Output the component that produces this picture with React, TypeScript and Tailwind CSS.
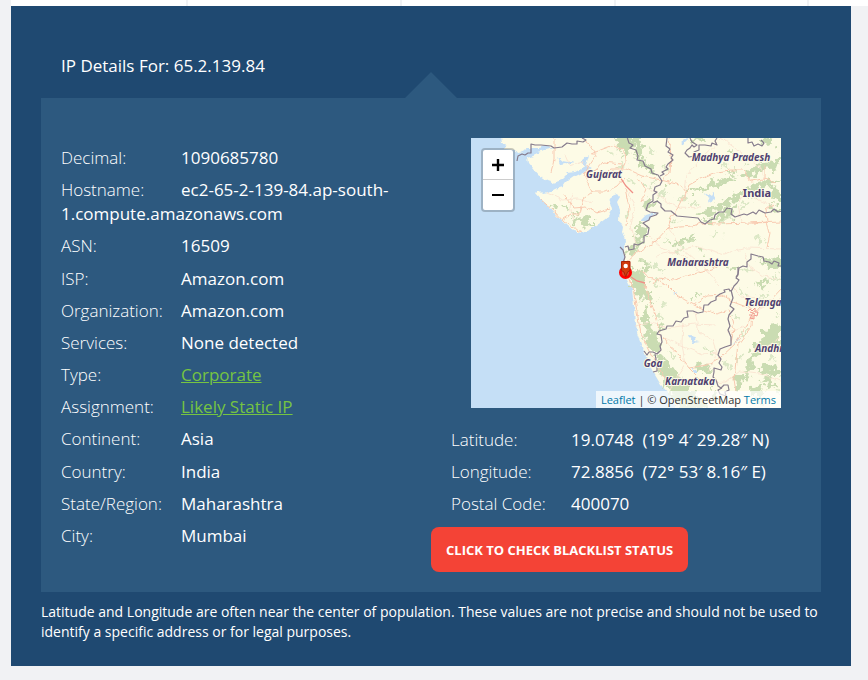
import React from "react";

type Entry = { label: string; value: string; href?: string };

const details: Entry[] = [
  { label: "Decimal:", value: "1090685780" },
  { label: "Hostname:", value: "ec2-65-2-139-84.ap-south-1.compute.amazonaws.com" },
  { label: "ASN:", value: "16509" },
  { label: "ISP:", value: "Amazon.com" },
  { label: "Organization:", value: "Amazon.com" },
  { label: "Services:", value: "None detected" },
  { label: "Type:", value: "Corporate", href: "#corporate" },
  { label: "Assignment:", value: "Likely Static IP", href: "#static" },
  { label: "Continent:", value: "Asia" },
  { label: "Country:", value: "India" },
  { label: "State/Region:", value: "Maharashtra" },
  { label: "City:", value: "Mumbai" },
];

const position: Entry[] = [
  { label: "Latitude:", value: "19.0748\u00a0 (19° 4′ 29.28″ N)" },
  { label: "Longitude:", value: "72.8856\u00a0 (72° 53′ 8.16″ E)" },
  { label: "Postal Code:", value: "400070" },
];

function Row({ label, value, href }: Entry) {
  return (
    <div>
      <dt className="inline-block w-[120px] font-light">{label}</dt>
      <dd className="inline">
        {href ? (
          <a href={href} className="text-[#76c442] underline">
            {value}
          </a>
        ) : (
          value
        )}
      </dd>
    </div>
  );
}

const places = [
  { name: "Gujarat", x: 133, y: 40, size: 10 },
  { name: "Madhya Pradesh", x: 260, y: 23, size: 10 },
  { name: "Maharashtra", x: 227, y: 128, size: 10 },
  { name: "Telangana", x: 298, y: 168, size: 10 },
  { name: "Andhra", x: 301, y: 214, size: 10 },
  { name: "Goa", x: 182, y: 229, size: 10 },
  { name: "Karnataka", x: 219, y: 247, size: 10 },
];

function MapDrawing() {
  return (
    <svg viewBox="0 0 310 270" className="block h-full w-full" preserveAspectRatio="xMidYMid slice" role="img" aria-label="Map of western India">
      <defs>
        <filter id="rough" x="-5%" y="-5%" width="110%" height="110%">
          <feTurbulence type="fractalNoise" baseFrequency="0.16" numOctaves="2" seed="4" />
          <feDisplacementMap in="SourceGraphic" scale="5" xChannelSelector="R" yChannelSelector="G" />
        </filter>
        <filter id="ragged" x="-5%" y="-5%" width="110%" height="110%">
          <feTurbulence type="fractalNoise" baseFrequency="0.16" numOctaves="3" seed="9" />
          <feDisplacementMap in="SourceGraphic" scale="16" xChannelSelector="R" yChannelSelector="G" />
        </filter>
      </defs>
      <rect width="310" height="270" fill="#c5dff6" />
      <path
        filter="url(#rough)"
        fill="#fdfbe6"
        d="M29-6 31 5 36 7 34 11 44 12 47 16 52 15 61 15 66 13 69 15 62 18 56 20 57 25 61 30 67 37 76 43 82 45 91 42 96 37 94 35 104 34 104 37 97 42 94 45 91 49 84 51 77 55 72 56 68 52 65 55 71 62 79 70 87 79 96 88 102 93 111 95 119 92 129 85 137 79 141 72 139 64 141 57 146 55 149 59 146 64 149 72 148 82 152 89 151 95 154 102 153 112 154 120 152 130 156 142 161 152 164 175 166 195 172 212 181 232 190 247 199 257 206 276H320V-6Z"
      />
      {/* lakes and inlets */}
      <g fill="#c5dff6" filter="url(#rough)">
        <path d="M86 19 91 23 97 24 103 23 99 27 94 26 90 27Z" />
        <path d="M110 24 118 17 115 27 121 30 111 35 105 38 99 37 106 33 113 29Z" />
        <path d="M49 14 58 10 68 10 76 8 82 10 74 12 66 14 56 17Z" />
        <path d="M170 82 175 77 182 75 187 75 180 79 175 83 170 83Z" />
        <path d="M234 55 240 59 243 53 243 59 245 62 241 61 239 64 237 60Z" />
        <path d="M209 5 216 0 218 1 212 7Z" />
        <path d="M218 198 225 199 223 203 228 204 221 205Z M263 205 269 198 267 203 262 207Z M219 228 226 233 224 235Z M202 156 206 154 205 157Z" />
      </g>
      {/* forests and hills */}
      <g fill="#cadcb2" filter="url(#ragged)">
        <path d="M144-2 148 10 153 20 163 8 160-4Z M162 0 172 0 170 14 174 24 187 34 183 37 173 30 165 22 164 12Z" />
        <path d="M102 80 114 79 124 83 124 89 113 88 104 85Z M82 66 88 67 86 72 81 70Z M90 67 96 67 94 71Z M102 74 106 74 105 78Z" />
        <path d="M193 45 199 45 196 50Z M169 70 178 63 186 61 184 66 175 72Z" />
        <path d="M216 54 232 48 252 40 267 37 260 44 243 49 226 54Z M268 36 285 28 311 19 311 27 293 33 275 41Z M254 35 264 32 262 37Z" />
        <path d="M224 78 240 71 255 60 272 51 287 44 302 41 311 43 296 49 281 54 267 62 254 70 239 76 230 80Z" />
        <path d="M230 84 242 79 252 73 264 68 263 78 245 82 235 86Z M298 46 311 55 311 63 300 58Z M297 67 309 68 309 74 302 75Z" />
        <path d="M165 86 177 89 177 96 169 99 165 94Z M163 100 172 98 174 103 166 110Z M158 110 166 108 164 116 157 115Z" />
        <path d="M198 105 211 101 225 98 217 105 202 108Z M228 107 234 115 230 116Z M170 121 180 124 182 130 171 132Z M194 80 210 84 199 83Z" />
        <path d="M159 130 169 132 173 140 172 147 178 154 182 163 179 165 172 158 169 164 165 155 160 146Z" />
        <path d="M171 170 175 168 177 181 183 192 188 206 190 213 180 213 173 203 177 194 170 180Z" />
        <path d="M184 215 191 219 199 227 207 237 214 246 230 260 239 271 209 274 201 258 191 244 187 230Z" />
        <path d="M188 185 193 188 191 199Z M228 225 241 229 233 237 225 232Z M240 258 246 250 249 267Z M222 157 232 155 224 162Z" />
        <path d="M283 207 291 202 293 190 305 185 311 190 311 207 301 209 289 216 280 219Z M276 226 282 215 283 230 277 244 274 240Z" />
        <path d="M284 231 293 226 306 230 310 236 299 238Z M288 242 298 240 309 248 298 250Z M265 238 273 236 270 255 264 251Z M280 249 290 247 294 257 278 257Z" />
        <path d="M285 120 303 122 311 117 311 132 297 129Z M256 129 266 127 262 133Z M286 146 298 139 293 150Z M218 3 232-2 237 4Z M290-1 305 2 302 7 290 5Z M257 13 264 12 262 20Z" />
      </g>
      {/* scattered woodland */}
      <g fill="none" stroke="#dce8c6" strokeWidth="3" filter="url(#ragged)">
        <path d="M176 48 184 46 M186 58 195 54 M206 62 216 60 M220 67 227 65 M250 30 258 27 M270 24 279 20 M178 10 183 16 M192 28 197 32" />
        <path d="M270 70 280 64 M285 58 294 55 M252 82 262 80 M190 104 197 100 M205 114 212 110 M183 126 192 134 M240 98 249 96 M286 98 291 104" />
        <path d="M182 140 189 149 M188 162 194 168 M240 126 251 124 M272 134 279 130 M301 138 309 142 M268 150 274 156 M290 160 296 157 M184 178 192 180" />
        <path d="M252 224 260 231 M236 212 243 214 M262 222 268 218 M297 218 304 222 M303 254 310 251 M286 262 294 264 M256 262 262 266 M196 214 204 218" />
        <path d="M146 30 154 26 M138 12 144 16 M158 42 163 46 M160 72 156 80 M272 196 278 192 M304 174 309 178 M264 176 269 182" />
      </g>
      {/* minor roads */}
      <g fill="none" stroke="#fae1cf" strokeWidth="0.800" filter="url(#rough)">
        <path d="M185 118 204 113 226 108 253 116 275 110 311 111 M198 91 212 112 231 128 248 147 M178 98 192 111 214 118 230 135" />
        <path d="M176 49 195 62 206 69 231 70 M214 52 216 37 231 20 250 2 M270 84 267 65 274 54 289 63 303 67 M250 0 271 15 287 27 294 42" />
        <path d="M164 188 180 185 196 190 222 186 245 187 M190 199 212 208 231 216 249 215 M212 185 211 205 214 227 205 240 199 252" />
        <path d="M224 174 228 194 241 201 246 215 237 235 M257 194 275 189 287 172 311 160 M282 212 295 209 311 199" />
        <path d="M76 55 91 62 107 61 121 65 M94 16 99 28 111 24 120 32 M102 55 99 69 103 83 M157 55 164 66 160 88 166 109" />
        <path d="M274 115 278 129 292 138 310 141 M260 149 269 158 286 160 M238 245 255 244 269 233 289 235 311 244" />
      </g>
      {/* highways */}
      <g fill="none" stroke="#f8c9b0" strokeWidth="1" filter="url(#rough)">
        <path d="M115 2 125 17 118 27 113 38 118 48 121 54 112 61 108 76 100 76 92 81 M121 54 135 54 146 48 153 40" />
        <path d="M91 55 103 70 115 69 126 75 139 71 M70 62 81 71 93 84 104 91 111 94 M128 40 141 31 155 31 171 38 190 42" />
        <path d="M120 16 132 11 143 7 153 12 154 24 149 35 M113 36 125 32 132 24 151 26 M83 0 83 22 80 34" />
        <path d="M190 42 199 35 200 18 198 0 M190 42 209 47 215 55 209 67 200 79 197 90 183 105 165 115 155 124" />
        <path d="M215 55 218 47 231 40 246 34 260 32 M260 32 272 32 280 43 293 41 305 44 M197 90 222 88 230 85 247 86 280 85 311 84" />
        <path d="M280 85 296 84 299 95 296 109 M296 84 295 72 303 66 M294 27 294 41 M166 132 184 141 196 147 207 158 223 167 233 171" />
        <path d="M223 167 236 158 252 157 262 164 281 171 M182 147 187 140 203 142 219 137 240 132 255 122" />
        <path d="M173 143 177 159 184 178 188 192 195 205 207 216 218 230 231 243 M218 230 236 227 250 219 263 207 276 188 282 174" />
        <path d="M282 174 281 188 267 206 265 223 263 241 265 254 M282 174 297 165 311 150 M156 132 162 150 166 174 170 196 183 222 195 242" />
        <path d="M170 64 175 52 167 40 M155 88 158 70 154 50 M231 171 245 176 258 172 263 191 260 205" />
      </g>
      <g fill="none" stroke="#ef8f86" strokeWidth="1.300">
        <path d="M149 39 155 48 162 55 M160 139 166 143 174 145" />
        <path d="M277 173 279 171 281 173 284 170 284 174 287 174 286 178 283 177 283 181 279 180 281 177 278 177 M279 174 284 176" strokeWidth="0.900" />
      </g>
      {/* state boundaries */}
      <g fill="none" stroke="#857b8c" strokeWidth="1.200" strokeLinejoin="round">
        <path d="M46 23 47 18 51 16 54 17 57 15 60 15 60 6 64 7 70 7 80 8 83 10 91 9 96 5 101 6 106 6 106 3 112 4 115 2 111 0" />
        <path d="M156-1 158 5 162 7 159 10 165 12 167 18 166 22 172 23 174 28 180 31 181 35 187 37 191 43 189 47 184 49 183 53 186 54 182 57 182 63 177 66 175 72 179 74 187 75 185 77 179 79 178 82 172 85 178 90 177 96 173 98 173 104 167 107 163 106 163 111 158 112 157 108 154 109" />
        <path d="M189 38 193 36 191 34 197 31 195 29 197 26 202 22 200 20 202 17 197 14 199 11 195 8 196 0" />
        <path d="M182 65 186 63 190 66 190 69 194 73 200 73 206 78 227 80 230 84 234 86 239 82 243 81 244 77 248 74 253 74 256 70 261 71 260 76 264 79 273 76 276 77 282 74 285 76 288 72 294 75 300 74 303 71 307 74 311 73" />
        <path d="M219 0 221 4 226 7 223 9 221 7 219 10 216 12 214 15 218 19 224 18 223 14 228 12 228 7 234 7 240 8 241 5 246 7 244 3 246 0 M277 0 277 5 281 4 283 8 287 6 291 8 293 5 290 2" />
        <path d="M311 128 307 128 308 125 303 123 301 126 298 124 293 123 292 119 287 118 280 116 280 121 276 124 276 129 272 128 268 130 267 136 265 139 M149 109 152 112 154 119 152 125" />
        <path d="M267 129 267 137 265 140 268 142 266 145 263 148 261 152 259 153 258 151 253 152 254 154 249 156 245 159 245 162 240 164 237 167 233 167 232 174 227 175 222 173 216 173 217 179 213 180 210 184 205 183 202 188 196 188 195 191 188 193 186 196 190 197 191 204 189 208 190 212 186 216 182 214 178 214 176 217 173 213" />
        <path d="M260 152 262 160 259 168 263 171 258 177 257 181 259 188 257 192 260 199 260 207 254 209 249 211 247 217 250 221 248 225 251 229 250 232 243 230 243 234 242 239 245 242 247 248 250 250 253 247 257 247 258 252 254 254 255 258 249 256 247 252 251 250" />
        <path d="M184 216 185 221 184 225 186 229 186 233 182 234" />
      </g>
      <g
        fill="#4f4170"
        stroke="#fdfbe6"
        strokeWidth="2"
        strokeLinejoin="round"
        paintOrder="stroke"
        textAnchor="middle"
        fontFamily="'Noto Sans', 'Open Sans', sans-serif"
        fontWeight="700"
      >
        {places.map((place) => (
          <text key={place.name} x={place.x} y={place.y} fontSize={place.size} fontStyle="italic">
            {place.name}
          </text>
        ))}
        <text x="286" y="59" fontSize="11">
          India
        </text>
      </g>
      {/* location marker */}
      <circle cx="154.500" cy="134.500" r="5" fill="#d8492a" stroke="#ff0000" strokeWidth="3" />
      <path d="M150.500 123.500H159V132.500L156.500 134 154.700 139 153 134 150.500 132.500Z" fill="#d23a0d" stroke="#a92308" />
      <circle cx="154.700" cy="128" r="2.200" fill="#fff" />
    </svg>
  );
}

function LocationMap() {
  return (
    <div className="relative mx-10 h-[270px] overflow-hidden bg-[#c5dff6]">
      <MapDrawing />
      <div className="absolute top-2.5 left-2.5 w-[34px] rounded border-2 border-black/20 bg-white bg-clip-padding">
        <button type="button" aria-label="Zoom in" className="flex h-[30px] w-full items-center justify-center border-b border-[#ccc]">
          <svg width="14" height="14" viewBox="0 0 14 14" aria-hidden="true">
            <path d="M1 7H13M7 1V13" stroke="#000" strokeWidth="2.400" />
          </svg>
        </button>
        <button type="button" aria-label="Zoom out" className="flex h-[30px] w-full items-center justify-center">
          <svg width="14" height="14" viewBox="0 0 14 14" aria-hidden="true">
            <path d="M1 7H13" stroke="#000" strokeWidth="2" />
          </svg>
        </button>
      </div>
      <div className="absolute right-0 bottom-0 bg-white/70 px-[5px] text-[11px] leading-[17px] whitespace-nowrap text-[#333]">
        <a href="#leaflet" className="text-[#0078a8]">
          Leaflet
        </a>{" "}
        | © OpenStreetMap{" "}
        <a href="#terms" className="text-[#0078a8]">
          Terms
        </a>
      </div>
    </div>
  );
}

export default function App() {
  return (
    <div className="min-h-screen bg-[#f1f2f4] font-['Open_Sans','Noto_Sans',sans-serif] text-white">
      <div className="ml-[11px] flex h-1.5 bg-white">
        <div className="w-[177px] border-r-2 border-[#f1f2f4]" />
        <div className="w-[214px] border-r-2 border-[#f1f2f4]" />
        <div className="w-[214px] border-r-2 border-[#f1f2f4]" />
        <div className="w-[193px] border-r-2 border-[#f1f2f4]" />
      </div>
      <main className="mr-[17px] ml-[11px] bg-[#1f4971] px-[30px] pt-12 pb-6">
        <h1 className="mb-5 px-5 text-[17px] leading-6">IP Details For: 65.2.139.84</h1>
        <section className="relative grid grid-cols-2 bg-[#2d597f] pt-10 pb-5 text-[17px] leading-6">
          <div className="absolute bottom-full left-1/2 h-[26px] w-[52px] -translate-x-1/2 bg-[#2d597f] [clip-path:polygon(50%_0,100%_100%,0_100%)]" />
          <dl className="flex flex-col justify-between px-5 pt-2 pb-6">
            {details.map((entry) => (
              <Row key={entry.label} {...entry} />
            ))}
          </dl>
          <div>
            <LocationMap />
            <dl className="mt-5 mb-[11px] flex flex-col gap-2 px-5">
              {position.map((entry) => (
                <Row key={entry.label} {...entry} />
              ))}
            </dl>
            <button type="button" className="block h-[45px] rounded-lg bg-[#f44336] px-[15px] text-[13px] font-bold">
              CLICK TO CHECK BLACKLIST STATUS
            </button>
          </div>
        </section>
        <p className="pt-2.5 text-[14px] leading-5">
          Latitude and Longitude are often near the center of population. These values are not precise and should not be
          used to identify a specific address or for legal purposes.
        </p>
      </main>
    </div>
  );
}
